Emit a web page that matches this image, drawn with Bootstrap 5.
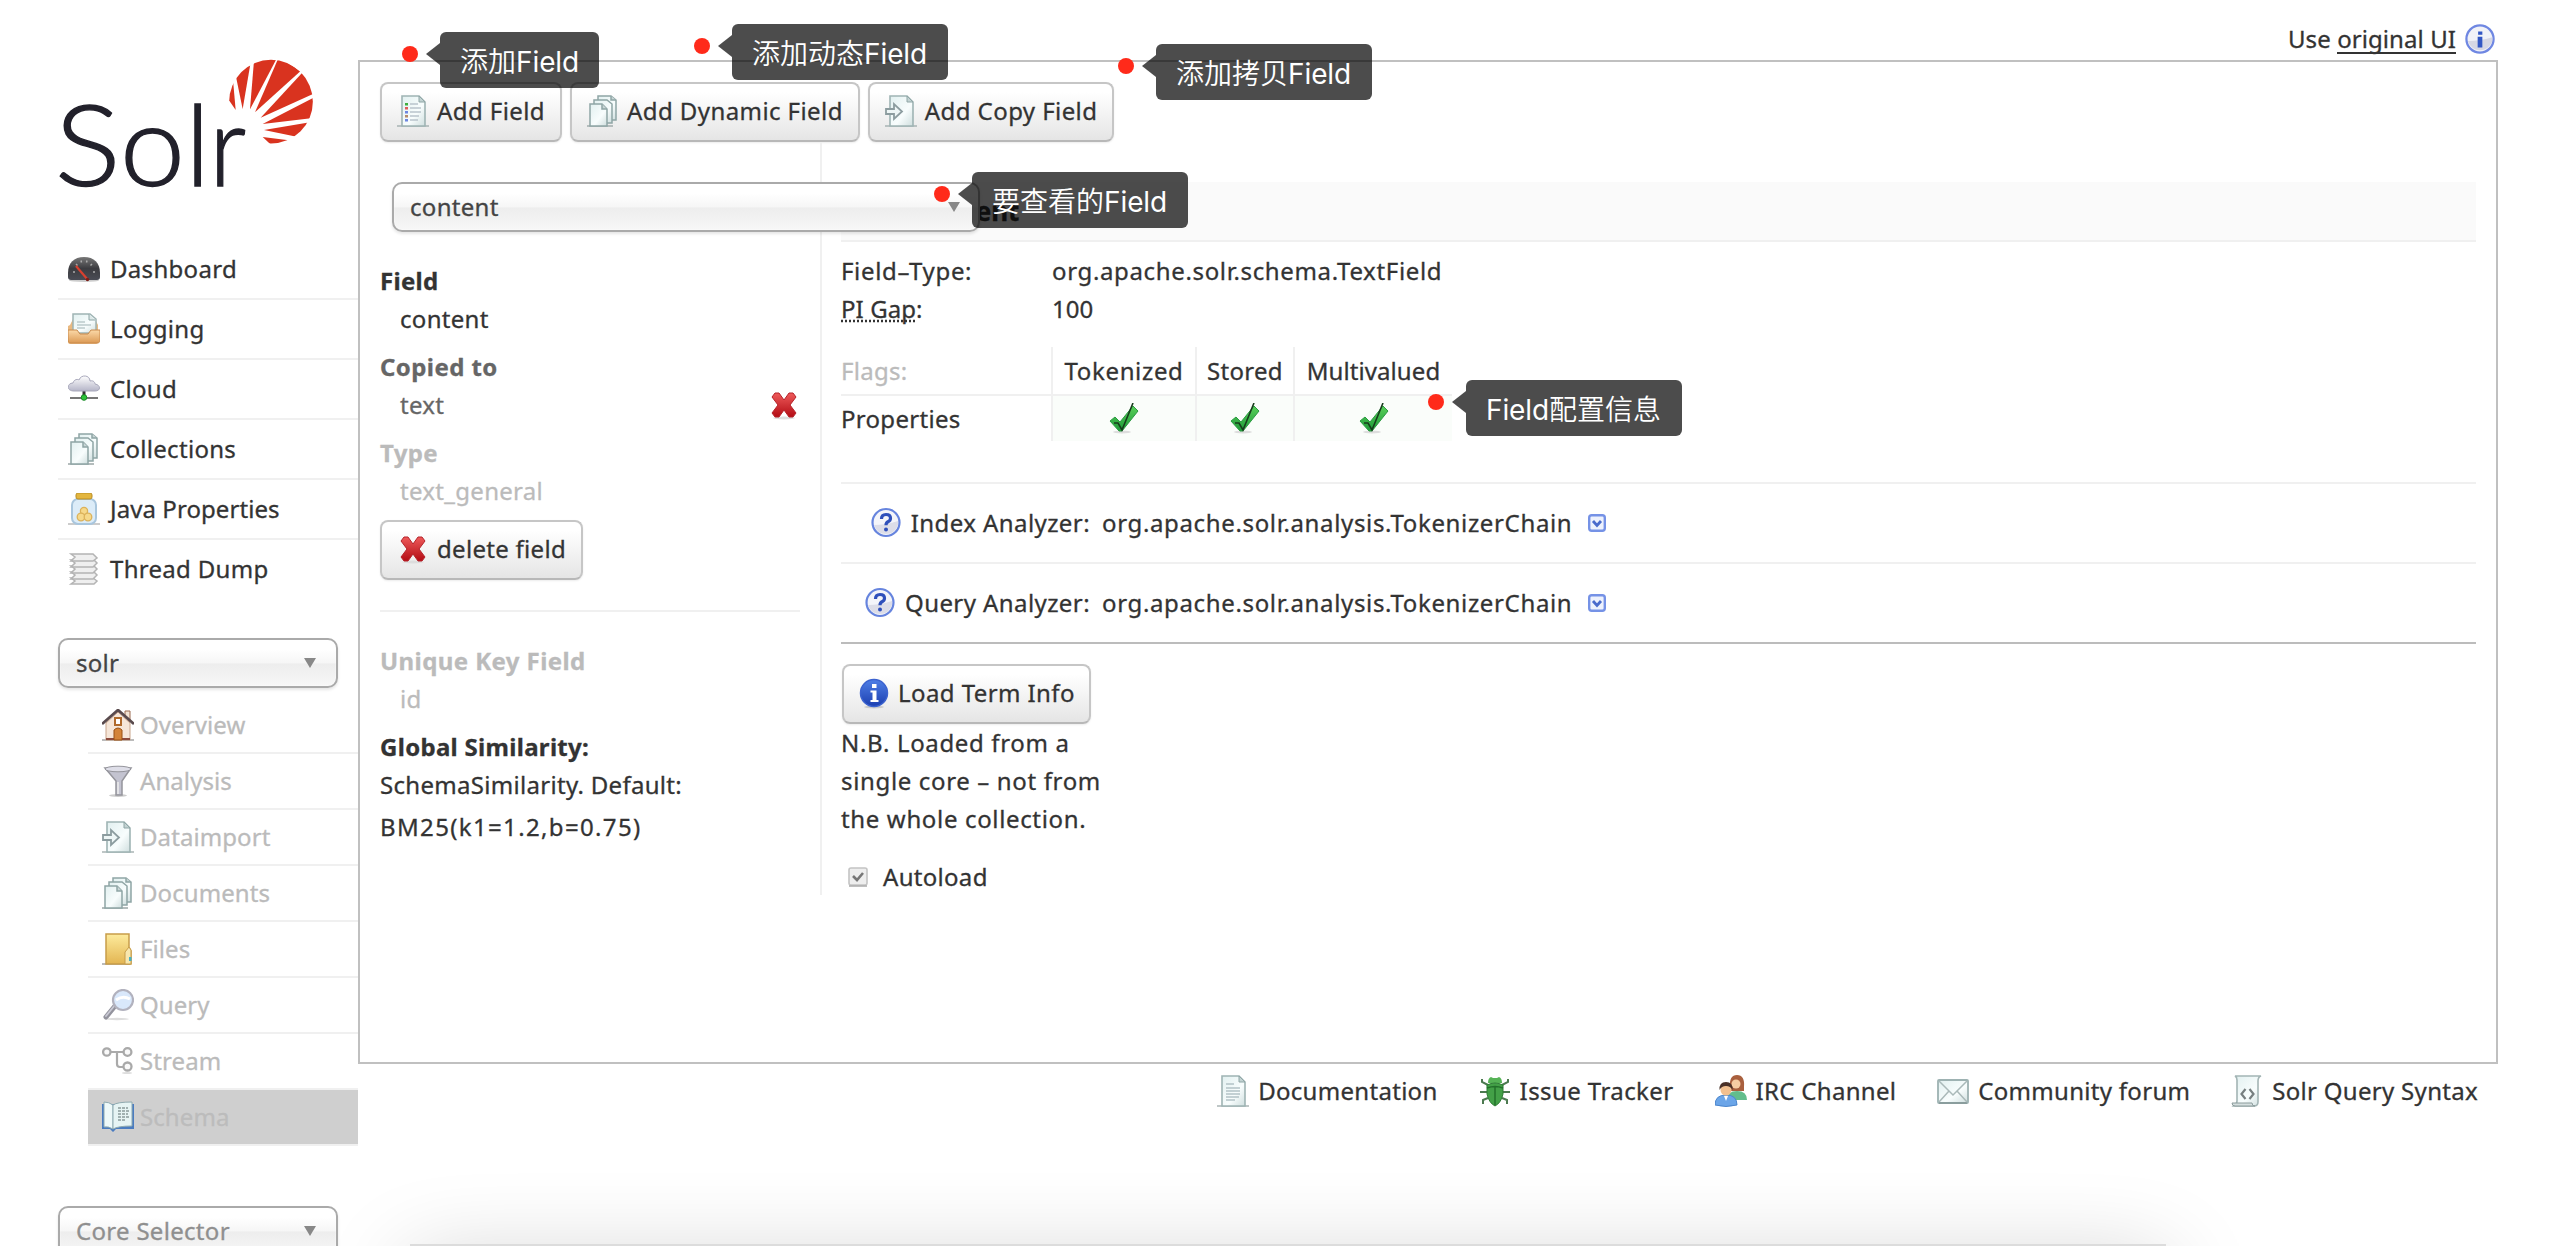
<!DOCTYPE html>
<html lang="en">
<head>
<meta charset="utf-8">
<meta name="viewport" content="width=device-width, initial-scale=1">
<title>Solr Admin</title>
<link href="https://cdn.jsdelivr.net/npm/bootstrap@5.3.0/dist/css/bootstrap.min.css" rel="stylesheet">
<style>
  body{font-family:"Noto Sans","Open Sans","Noto Sans CJK SC",sans-serif;font-size:24px;line-height:38px;color:#333;letter-spacing:.3px;background:#fff;height:1246px;overflow:hidden;position:relative;-webkit-text-stroke:.3px}
  a{color:inherit;text-decoration:none}
  .ico{width:32px;height:32px;flex:none;display:block}
  .side{width:358px;padding:50px 0 0 58px}
  .logo{width:280px;height:150px;margin-left:-8px;display:block;-webkit-text-stroke:0}
  .mainnav{margin-top:40px}
  .mainnav a{height:60px;padding-left:10px;gap:10px;border-bottom:2px solid #f0f0f0}
  .mainnav a:last-child{border-color:transparent}
  .coresel{margin-top:38px}
  .subnav{margin:10px 0 60px 30px;color:#bbb}
  .subnav a{height:56px;padding-left:14px;gap:6px;border-bottom:2px solid #f0f0f0}
  .subnav .on{background:#cfcfcf;background-clip:padding-box;color:#bcbcbc}
  .picker{height:50px;border:2px solid #aaa;border-radius:10px;padding:0 20px 0 16px;color:#444;background:linear-gradient(#fff 20%,#f6f6f6 50%,#ededed 52%,#f7f7f7 100%);box-shadow:0 2px 3px rgba(0,0,0,.1),inset 0 0 2px #fff}
  .picker::after{content:"";border:6px solid transparent;border-top:10px solid #888;border-bottom:0}
  .picker.empty{color:#8f8f8f}
  .side .picker{width:280px}
  .head{height:60px;padding:20px 1px 2px 0;gap:9px}
  .orig{border-bottom:2px solid #333;line-height:30px;height:30px}
  .usel{line-height:30px}
  .pane{width:2140px}
  .sheet{height:1004px;border:2px solid #c0c0c0;padding-top:20px}
  .act{height:60px;border:2px solid #c6c6c6;border-bottom-color:#b8b8b8;border-radius:8px;background:linear-gradient(#fff 15%,#e5e5e5);padding:0 15px 2px;gap:8px;color:#333;box-shadow:0 1px 2px rgba(0,0,0,.08)}
  .act.load{padding-left:14px;padding-right:14px;margin-left:1px}
  .tools{padding-left:20px;gap:8px}
  .lcol{width:462px;height:753px;padding:40px 20px 0 20px;border-right:2px solid #f0f0f0}
  .lcol .picker{width:588px;margin:0 0 30px 12px;position:relative;z-index:1;padding-right:18px}
  .ind{padding-left:20px}
  .dimt{color:#bbb}.mid{color:#666}
  .g10{margin-top:10px}
  .rule{height:2px;background:#f0f0f0}
  .lcol .rule{margin:30px 0}
  .rcol .rule{background:#bcbcbc;margin-bottom:20px}
  .rcol{padding:40px 20px 0 19px}
  .fhead{height:60px;background:#fafafa;border-bottom:2px solid #f0f0f0;font-size:26px;line-height:58px;font-weight:700;letter-spacing:0;color:#333;padding-left:1px;margin:0 0 10px}
  .key{width:211px}
  .flags{margin:19px 0 41px;width:611px;border-collapse:collapse;line-height:38px}
  .flags th,.flags td{padding:0;font-weight:400;text-align:center}
  .flags tr:first-child>*{height:48px;border-bottom:2px solid #f0f0f0}
  .flags tr:last-child>*{height:46px}
  .flags .key{text-align:left;width:211px}
  .flags th+th,.flags td{border-left:2px solid #f0f0f0}
  .flags td{background:#fafdfa}
  .flags svg{margin:auto}
  .ana{height:80px;border-top:2px solid #f0f0f0}
  .ana .lbl{width:249px;gap:9px}
  .chain{margin:0 16px 0 12px}
  .dd{width:18px;height:18px;flex:none}
  .auto{margin-top:20px;padding-left:7px;gap:15px}
  .links{padding:8px 20px 0 0;gap:41px}
  .links a{gap:9px}
  .t0{letter-spacing:.08px}.t4{letter-spacing:.42px}.t6{letter-spacing:.65px}.t13{letter-spacing:1.35px}
  /* annotation bubbles lie over the page */
  .tip{position:absolute;z-index:5;height:56px;border-radius:6px;background:rgba(0,0,0,.7);color:#fff;font:400 28px/56px Inter,Roboto,"Noto Sans CJK SC",sans-serif;letter-spacing:-.1px;padding:0 0 0 20px;white-space:nowrap;-webkit-text-stroke:0}
  .tip b{font:350 28px/56px "Noto Sans CJK SC",sans-serif;letter-spacing:0}
  .tip::before{content:"";position:absolute;left:-14px;top:11px;border:11px solid transparent;border-right:14px solid rgba(0,0,0,.7);border-left:0}
  .tip::after{content:"";position:absolute;left:-38px;top:14px;width:16px;height:16px;border-radius:50%;background:#ff2a1a}
  #n1{left:440px;top:32px;width:159px}
  #n2{left:732px;top:24px;width:216px}
  #n3{left:1156px;top:44px;width:216px}
  #n4{left:972px;top:172px;width:216px}
  #n5{left:1466px;top:380px;width:216px}
  .dock{position:absolute;left:410px;top:1244px;width:1756px;height:60px;background:#dcdcdc;box-shadow:0 20px 90px 0 rgba(0,0,0,.22)}
</style>
</head>
<body>
<svg width="0" height="0" class="position-absolute">
  <defs>
    <linearGradient id="pg" x2="1" y2="1"><stop offset="0" stop-color="#e2f0f0"/><stop offset=".6" stop-color="#f8fdfd"/><stop offset="1" stop-color="#cfdede"/></linearGradient>
    <linearGradient id="or" x2="0" y2="1"><stop offset="0" stop-color="#fbd9a8"/><stop offset="1" stop-color="#dc9a55"/></linearGradient>
    <linearGradient id="ye" x2="0" y2="1"><stop offset="0" stop-color="#fdeb9d"/><stop offset="1" stop-color="#e3b552"/></linearGradient>
    <linearGradient id="gy" x2="0" y2="1"><stop offset="0" stop-color="#fff"/><stop offset="1" stop-color="#b5b5c8"/></linearGradient>
    <linearGradient id="bk" x2="0" y2="1"><stop offset="0" stop-color="#777"/><stop offset=".5" stop-color="#3c3c40"/><stop offset="1" stop-color="#4a4c55"/></linearGradient>
    <linearGradient id="gn" x2="0" y2="1"><stop offset="0" stop-color="#58cf58"/><stop offset="1" stop-color="#1f9a3a"/></linearGradient>
    <linearGradient id="rd" x2="0" y2="1"><stop offset="0" stop-color="#ee5a5a"/><stop offset="1" stop-color="#b30c14"/></linearGradient>
    <linearGradient id="bl" x2="0" y2="1"><stop offset="0" stop-color="#4f7fe6"/><stop offset="1" stop-color="#1c3fb0"/></linearGradient>
    <g id="sheetp"><path d="M0 31h32" stroke="#a4b0b0" stroke-width="2" opacity=".7"/><path d="M5 1h17l6 6v24H5z" fill="url(#pg)" stroke="#9fb4b4" stroke-width="1.6"/><path d="M22 1v6h6z" fill="#c3d3d3" stroke="#8fa6a6"/></g>
    <symbol id="i-list" viewBox="0 0 32 32"><use href="#sheetp"/><g stroke="#b9c4cc" stroke-width="1.6"><path d="M13 9h8M13 13h11M13 17h11M13 21h9M13 25h8"/></g><g><path fill="#3fae3f" d="M8 8h3v2.500H8z"/><path fill="#e05a5a" d="M8 12h3v2.500H8z"/><path fill="#6d86e0" d="M8 16h3v2.500H8zM8 24h3v2.500H8z"/><path fill="#b58a6a" d="M8 20h3v2.500H8z"/></g></symbol>
    <symbol id="i-doc" viewBox="0 0 32 32"><use href="#sheetp"/><path d="M9 9h8M9 13h14M9 16h14M9 19h14M9 22h13M9 25h9" stroke="#b3c2c6" stroke-width="1.5"/></symbol>
    <symbol id="i-docs" viewBox="0 0 32 32"><path d="M0 31h26" stroke="#b4bcbc" stroke-width="2"/><g fill="url(#pg)" stroke="#8fa5a5" stroke-width="1.5"><path d="M11 1h13l5 4v20H11z"/><path d="M7 5h13l5 4v19H7z"/><path d="M3 9h12l5 5v17H3z"/><path d="M15 9v5h5M24 1v4h5" fill="#c8d6d6"/></g></symbol>
    <symbol id="i-imp" viewBox="0 0 32 32"><use href="#sheetp"/><path d="M1 14h8V9l8 7.500-8 7.500v-5H1z" fill="#eef6f6" stroke="#8c9c9f" stroke-width="1.800"/></symbol>
    <symbol id="i-dash" viewBox="0 0 32 32"><ellipse cx="16" cy="27.500" rx="15" ry="1.500" fill="#ccc"/><path d="M0 20C0 10 6 4 16 4s16 6 16 16v4c0 2-1 3-3 3H3c-2 0-3-1-3-3z" fill="url(#bk)"/><path d="M5 19l2 0M8 11l1.500 1.500M13 7.500l.5 2M19 7.500l-.5 2M24 11l-1.500 1.500M27 19h-2" stroke="#aaa" stroke-width="1.500"/><path d="M8 13l12 14" stroke="#d8402f" stroke-width="2.200"/><circle cx="19.500" cy="26.500" r="1.700" fill="#7a1c16"/></symbol>
    <symbol id="i-log" viewBox="0 0 32 32"><path d="M2 12L5 6h22l3 6v17c0 1-1 2-2 2H2c-1 0-2-1-2-2V13z" fill="#e9b981"/><path d="M5 1h17l6 5v14H5z" fill="url(#pg)" stroke="#9fb4b4" stroke-width="1.500"/><path d="M21 1v6h6" fill="#dce8e8" stroke="#8fa6a6"/><path d="M9 9h8M9 12h14M9 15h8" stroke="#bccacc" stroke-width="1.500"/><path d="M0 17h9l3 4h8l3-4h9v10c0 2-1 3-3 3H3c-2 0-3-1-3-3z" fill="url(#or)" stroke="#c98a4c"/></symbol>
    <symbol id="i-cloud" viewBox="0 0 32 32"><path d="M2 25h28" stroke="#777" stroke-width="2"/><path d="M16 17v7" stroke="#333" stroke-width="3"/><circle cx="16" cy="24.500" r="2.800" fill="#2ec53a" stroke="#188a24"/><path d="M6 18c-8 0-7-8-1-8 1-4 5-4 6-3 2-6 11-5 11 1 4-1 5 2 5 3 6 1 6 7 0 7z" fill="url(#gy)" stroke="#a8a8bb"/></symbol>
    <symbol id="i-jar" viewBox="0 0 32 32"><path d="M0 31h32" stroke="#ccc" stroke-width="2"/><rect x="4" y="6" width="24" height="25" rx="6" fill="#dcecf8" stroke="#a9c6dd" stroke-width="2"/><rect x="8" y="0" width="16" height="6" rx="2" fill="#e3b63f" stroke="#b98d24"/><g fill="#f6d98a" stroke="#dcb25a" stroke-width="1.300"><circle cx="16" cy="18" r="3.600"/><circle cx="13" cy="24" r="3.800"/><circle cx="20" cy="24" r="3.800"/></g></symbol>
    <symbol id="i-zig" viewBox="0 0 32 32"><g fill="#efefef" stroke="#b4b4b4" stroke-width="1.500"><path d="M3 25h22l4 3-3 3H3l4-3z"/><path d="M3 19h23l3 3-4 4H3l4-4z"/><path d="M3 13h23l3 3-4 4H3l4-4z"/><path d="M3 7h23l3 3-4 4H3l4-4z"/><path d="M3 1h22l4 4-4 3H3l4-4z"/></g></symbol>
    <symbol id="i-house" viewBox="0 0 32 32"><path d="M0 31h32" stroke="#bbb" stroke-width="2"/><path d="M23 2h5v10h-5z" fill="#f3e3d3" stroke="#9c6a50"/><path d="M4 14L16 3l12 11v17H4z" fill="#f6e6d8" stroke="#c9a58c"/><path d="M4 29h24v2H4z" fill="#8c4a3c"/><path d="M0 15L16 1l16 14" fill="none" stroke="#594a4d" stroke-width="2.800"/><rect x="13" y="9" width="6" height="7" fill="#fff" stroke="#b06a2c" stroke-width="2"/><path d="M12 31V21q4-4 8 0v10z" fill="#d38338" stroke="#9a5114"/></symbol>
    <symbol id="i-funnel" viewBox="0 0 32 32"><ellipse cx="16" cy="30.500" rx="9" ry="1.500" fill="#ccc"/><path d="M3 3h26l-9 13v14h-6V16z" fill="#c3c3d0" stroke="#95959c" stroke-width="1.500"/><ellipse cx="16" cy="4" rx="13" ry="2.800" fill="#dedee8" stroke="#95959c"/><path d="M16 17v12" stroke="#eee" stroke-width="1.500"/></symbol>
    <symbol id="i-folder" viewBox="0 0 32 32"><path d="M0 31h28" stroke="#bbb" stroke-width="2"/><path d="M4 1h23v13l2 4v13H4z" fill="url(#ye)" stroke="#c79d4a" stroke-width="1.500"/><path d="M23 31V19l4-5 2 3v14z" fill="#f8e7ae" stroke="#c79d4a"/><path d="M27 24h2.500v4H27z" fill="#49b0c4"/></symbol>
    <symbol id="i-mag" viewBox="0 0 32 32"><ellipse cx="15" cy="30" rx="12" ry="1.200" fill="#ddd"/><path d="M4 28l9-11" stroke="#93939d" stroke-width="5" stroke-linecap="round"/><path d="M4 27l9-11" stroke="#c9c9d4" stroke-width="1.800" stroke-linecap="round"/><circle cx="21" cy="11" r="10" fill="#d9e8fb" stroke="#b2b2be" stroke-width="2.200"/><path d="M14 11q7-5 14-1" stroke="#fff" stroke-width="3" fill="none"/></symbol>
    <symbol id="i-stream" viewBox="0 0 32 32"><path d="M8 7h14M15 7v12q0 3 3 3h4" fill="none" stroke="#aaa" stroke-width="2.200"/><g fill="#fafafa" stroke="#a9a9a9" stroke-width="2.300"><circle cx="4.800" cy="7" r="3.700"/><circle cx="25.500" cy="7" r="3.900"/><circle cx="25.500" cy="21.500" r="4"/></g><ellipse cx="25" cy="28" rx="5" ry="1" fill="#ddd"/></symbol>
    <symbol id="i-book" viewBox="0 0 32 32"><path d="M0 3h32v25H14l-3 3-3-3H0z" fill="#4a7cc0"/><path d="M2 1q5 0 9 3v24q-5-3-9-2z" fill="#eef9f9" stroke="#8faab0"/><path d="M11 4q4-3 19-3v24q-14 0-19 3z" fill="#e6f4f4" stroke="#8faab0"/><path d="M16 7h10M16 10h12M16 13h10M16 16h12M16 19h8" stroke="#8b9a9a" stroke-width="1.400" stroke-dasharray="3 1"/></symbol>
    <symbol id="i-x" viewBox="0 0 32 32"><ellipse cx="16" cy="29" rx="11" ry="1.500" fill="#ddd"/><path d="M7 4h4l5 7 5-7h4l3 4-6 8 6 8-3 4h-4l-5-7-5 7H7l-3-4 6-8-6-8z" fill="url(#rd)" stroke="#b5232a"/></symbol>
    <symbol id="i-check" viewBox="0 0 32 32"><ellipse cx="14" cy="29" rx="9" ry="1.500" fill="#ddd"/><path d="M2 18l5-4 5 5L25 3l5 5-16 20h-3z" fill="url(#gn)" stroke="#2c9c42"/><path d="M6 20h4l4 7L25 0" fill="none" stroke="#173c1c" stroke-width="1.600"/></symbol>
    <symbol id="i-q" viewBox="0 0 32 32"><circle cx="16" cy="15.500" r="13.500" fill="#f4f5fa" stroke="#6684de" stroke-width="2.200"/><path d="M4 18q12 0 24-4v4q-3 9-12 9T4 18" fill="#dcdde8"/><path d="M11.500 12q0-4.500 4.500-4.500t4.500 3.700q0 2.300-2.500 3.500-2 1-2 3.500" fill="none" stroke="#2f50bb" stroke-width="3.200"/><circle cx="16" cy="22.500" r="2" fill="#2f50bb"/></symbol>
    <symbol id="i-info" viewBox="0 0 32 32"><circle cx="16" cy="16" r="14.500" fill="#f1f2f8" stroke="#6f87e2" stroke-width="2.400"/><path d="M3 18q13 0 26-4v5q-4 9-13 9T3 18" fill="#d6d7e4"/><path d="M14 8h4.500v3.500H14zM13.500 13.500h5V25h-5z" fill="#3357c4"/></symbol>
    <symbol id="i-infos" viewBox="0 0 32 32"><ellipse cx="16" cy="30" rx="10" ry="1.500" fill="#ccc"/><circle cx="16" cy="16" r="13.500" fill="url(#bl)" stroke="#3c63cf" stroke-width="1.500"/><path d="M14 7h4.500v4H14zM12.500 13.500h6V23h2v2h-8v-2h2v-7.500h-2z" fill="#fff"/></symbol>
    <symbol id="i-drop" viewBox="0 0 18 18"><rect x="1.200" y="1.200" width="15.600" height="15.600" rx="2.500" fill="#eef2fd" stroke="#7592e6" stroke-width="2.400"/><path d="M5 7l4 4.500L13 7" fill="none" stroke="#4a6bcc" stroke-width="2.800"/></symbol>
    <symbol id="i-box" viewBox="0 0 20 20"><rect x="1" y="1" width="18" height="17" rx="2" fill="#eee" stroke="#c4c4c4" stroke-width="1.600"/><path d="M1 19h18" stroke="#aaa" stroke-width="1.500"/><path d="M5 9l4 4 6-7" fill="none" stroke="#777" stroke-width="2.600"/></symbol>
    <symbol id="i-bug" viewBox="0 0 32 32"><path d="M9 10L3 7V4M8 17H1M9 23l-5 2v4M23 10l6-3V4M24 17h7M23 23l5 2v4" fill="none" stroke="#4c7a50" stroke-width="2"/><path d="M9 8q0-5 3-6l2 1h4l2-1q3 1 3 6z" fill="#56b356"/><path d="M8 10q8-4 16 0v9q-2 9-8 12-6-3-8-12z" fill="#43a047" stroke="#2c7c33"/><path d="M8 13q8-3 16 0M16 12v18" stroke="#23702b" stroke-width="1.500" fill="none"/></symbol>
    <symbol id="i-ppl" viewBox="0 0 32 32"><path d="M15 12q-1-12 7-12t7 12v4H15z" fill="#a9603e"/><path d="M12 25q0-9 10-9t10 9z" fill="#62bd8c"/><circle cx="21" cy="9" r="4.500" fill="#f6cda2"/><path d="M0 30q0-10 11-10t11 10q-11 3-22 0z" fill="#6ba5e8" stroke="#4c86cc"/><circle cx="11" cy="15" r="5.500" fill="#f2c08f"/><path d="M4.500 15Q4 7 11 7t6.500 8q-2-4-6.500-4t-6.500 4z" fill="#4a3128"/><path d="M9 21h4l-2 5z" fill="#fff"/></symbol>
    <symbol id="i-mail" viewBox="0 0 32 32"><rect x="1" y="5" width="30" height="23" rx="1" fill="url(#pg)" stroke="#9db2b2" stroke-width="1.800"/><path d="M2 28h28" stroke="#8a9d9d" stroke-width="2"/><path d="M2 6l14 14L30 6M2 27l10-11M30 27L20 16" fill="none" stroke="#aab9b9" stroke-width="1.500"/></symbol>
    <symbol id="i-code" viewBox="0 0 32 32"><path d="M6 1h24q-3 1-3 5v21q0 4-4 4H3q3-2 3-5V5q0-3-2-4z" fill="url(#pg)" stroke="#a3b5b5" stroke-width="1.600"/><path d="M1 28h20q0 3 3 3H4q-3 0-3-3z" fill="#d5dfdf" stroke="#8c9c9c"/><path d="M14.500 14l-4 5 4 5M18.500 14l4 5-4 5" fill="none" stroke="#777f80" stroke-width="2.200"/></symbol>
  </defs>
</svg>

<div class="d-flex">
  <aside class="side flex-shrink-0">
    <svg class="logo" viewBox="0 0 840 450" role="img" aria-label="Solr">
      <clipPath id="sun"><circle cx="663" cy="155" r="125.500"/></clipPath>
      <g font-family="Lato" font-weight="300" font-size="336" fill="#22212b" stroke="#22212b" stroke-width="4">
        <text transform="translate(14 408) scale(1.1 1)">S</text>
        <text transform="translate(210 408) scale(1.04 1)">o</text>
        <text x="406" y="408">l</text>
        <text transform="translate(478 408) scale(.93 1)">r</text>
      </g>
      <g fill="#d9331f" clip-path="url(#sun)">
        <path d="M530 140l19-50 8 90-17-25z"/><path d="M558 80l46-55-26 152z"/><path d="M613 20h70l-83 158z"/><path d="M687 20l64 44-136 123z"/><path d="M756 69l50 55-174 79z"/><path d="M800 138v65l-162 19z"/><path d="M790 215l-50 45-98-20z"/><path d="M716 271l-46 20-32-30z"/>
      </g>
    </svg>
    <nav class="mainnav">
      <a class="d-flex align-items-center" href="#"><svg class="ico"><use href="#i-dash"/></svg>Dashboard</a>
      <a class="d-flex align-items-center" href="#"><svg class="ico"><use href="#i-log"/></svg>Logging</a>
      <a class="d-flex align-items-center" href="#"><svg class="ico"><use href="#i-cloud"/></svg>Cloud</a>
      <a class="d-flex align-items-center" href="#"><svg class="ico"><use href="#i-docs"/></svg>Collections</a>
      <a class="d-flex align-items-center t0" href="#"><svg class="ico"><use href="#i-jar"/></svg>Java Properties</a>
      <a class="d-flex align-items-center" href="#"><svg class="ico"><use href="#i-zig"/></svg>Thread Dump</a>
    </nav>
    <div class="picker coresel d-flex align-items-center justify-content-between"><span>solr</span></div>
    <nav class="subnav t0">
      <a class="d-flex align-items-center" href="#"><svg class="ico"><use href="#i-house"/></svg>Overview</a>
      <a class="d-flex align-items-center" href="#"><svg class="ico"><use href="#i-funnel"/></svg>Analysis</a>
      <a class="d-flex align-items-center" href="#"><svg class="ico"><use href="#i-imp"/></svg>Dataimport</a>
      <a class="d-flex align-items-center" href="#"><svg class="ico"><use href="#i-docs"/></svg>Documents</a>
      <a class="d-flex align-items-center" href="#"><svg class="ico"><use href="#i-folder"/></svg>Files</a>
      <a class="d-flex align-items-center" href="#"><svg class="ico"><use href="#i-mag"/></svg>Query</a>
      <a class="d-flex align-items-center" href="#"><svg class="ico"><use href="#i-stream"/></svg>Stream</a>
      <a class="d-flex align-items-center on" href="#"><svg class="ico"><use href="#i-book"/></svg>Schema</a>
    </nav>
    <div class="picker empty d-flex align-items-center justify-content-between"><span>Core Selector</span></div>
  </aside>

  <div class="pane flex-shrink-0">
    <header class="head d-flex justify-content-end align-items-start t0">
      <span class="usel d-flex mt-1">Use&nbsp;<a class="orig" href="#">original UI</a></span>
      <svg class="ico mt-1"><use href="#i-info" width="30" height="30"/></svg>
    </header>
    <main class="sheet">
      <div class="tools d-flex">
        <a class="act d-flex align-items-center t4" href="#"><svg class="ico"><use href="#i-list"/></svg>Add Field</a>
        <a class="act d-flex align-items-center t4" href="#"><svg class="ico"><use href="#i-docs"/></svg>Add Dynamic Field</a>
        <a class="act d-flex align-items-center t4" href="#"><svg class="ico"><use href="#i-imp"/></svg>Add Copy Field</a>
      </div>
      <div class="d-flex">
        <section class="lcol flex-shrink-0">
          <div class="picker d-flex align-items-center justify-content-between"><span>content</span></div>
          <div class="fw-bold">Field</div>
          <div class="ind">content</div>
          <div class="fw-bold mid g10 t4">Copied to</div>
          <div class="ind mid d-flex justify-content-between align-items-center">text<svg class="ico"><use href="#i-x"/></svg></div>
          <div class="fw-bold dimt g10">Type</div>
          <div class="ind dimt">text_general</div>
          <a class="act g10 d-inline-flex align-items-center align-top" href="#"><svg class="ico"><use href="#i-x"/></svg>delete field</a>
          <div class="rule"></div>
          <div class="fw-bold dimt t4">Unique Key Field</div>
          <div class="ind dimt">id</div>
          <div class="fw-bold g10">Global Similarity:</div>
          <div>SchemaSimilarity. Default:</div>
          <div class="t13 pt-1">BM25(k1=1.2,b=0.75)</div>
        </section>
        <section class="rcol flex-grow-1">
          <h2 class="fhead">Field: content</h2>
          <div class="d-flex t6"><span class="key">Field–Type:</span><span>org.apache.solr.schema.TextField</span></div>
          <div class="d-flex t0"><span class="key"><abbr title="Position Increment Gap">PI Gap</abbr>:</span><span>100</span></div>
          <table class="flags">
            <tr><th class="key dimt">Flags:</th><th class="t6" style="width:144px">Tokenized</th><th style="width:98px">Stored</th><th class="t0">Multivalued</th></tr>
            <tr><th class="key">Properties</th><td><svg class="ico"><use href="#i-check"/></svg></td><td><svg class="ico"><use href="#i-check"/></svg></td><td><svg class="ico"><use href="#i-check"/></svg></td></tr>
          </table>
          <div class="ana d-flex align-items-center"><span class="lbl d-flex align-items-center justify-content-end t4"><svg class="ico"><use href="#i-q"/></svg>Index Analyzer:</span><span class="chain t6">org.apache.solr.analysis.TokenizerChain</span><svg class="dd"><use href="#i-drop"/></svg></div>
          <div class="ana d-flex align-items-center"><span class="lbl d-flex align-items-center justify-content-end t4"><svg class="ico"><use href="#i-q"/></svg>Query Analyzer:</span><span class="chain t6">org.apache.solr.analysis.TokenizerChain</span><svg class="dd"><use href="#i-drop"/></svg></div>
          <div class="rule"></div>
          <a class="act load d-inline-flex align-items-center align-top t4" href="#"><svg class="ico"><use href="#i-infos"/></svg>Load Term Info</a>
          <div class="t6">N.B. Loaded from a<br>single core – not from<br>the whole collection.</div>
          <label class="auto d-flex align-items-center"><svg style="width:20px;height:20px"><use href="#i-box"/></svg>Autoload</label>
        </section>
      </div>
    </main>
    <footer class="links d-flex justify-content-end">
      <a class="d-flex align-items-center" href="#"><svg class="ico"><use href="#i-doc"/></svg>Documentation</a>
      <a class="d-flex align-items-center t4" href="#"><svg class="ico"><use href="#i-bug"/></svg>Issue Tracker</a>
      <a class="d-flex align-items-center" href="#"><svg class="ico"><use href="#i-ppl"/></svg>IRC Channel</a>
      <a class="d-flex align-items-center" href="#"><svg class="ico"><use href="#i-mail"/></svg>Community forum</a>
      <a class="d-flex align-items-center" href="#"><svg class="ico"><use href="#i-code"/></svg>Solr Query Syntax</a>
    </footer>
  </div>
</div>

<div class="tip" id="n1"><b>添加</b>Field</div>
<div class="tip" id="n2"><b>添加动态</b>Field</div>
<div class="tip" id="n3"><b>添加拷贝</b>Field</div>
<div class="tip" id="n4"><b>要查看的</b>Field</div>
<div class="tip" id="n5">Field<b>配置信息</b></div>
<div class="dock"></div>
<script src="https://cdn.jsdelivr.net/npm/bootstrap@5.3.0/dist/js/bootstrap.bundle.min.js"></script>
</body>
</html>
